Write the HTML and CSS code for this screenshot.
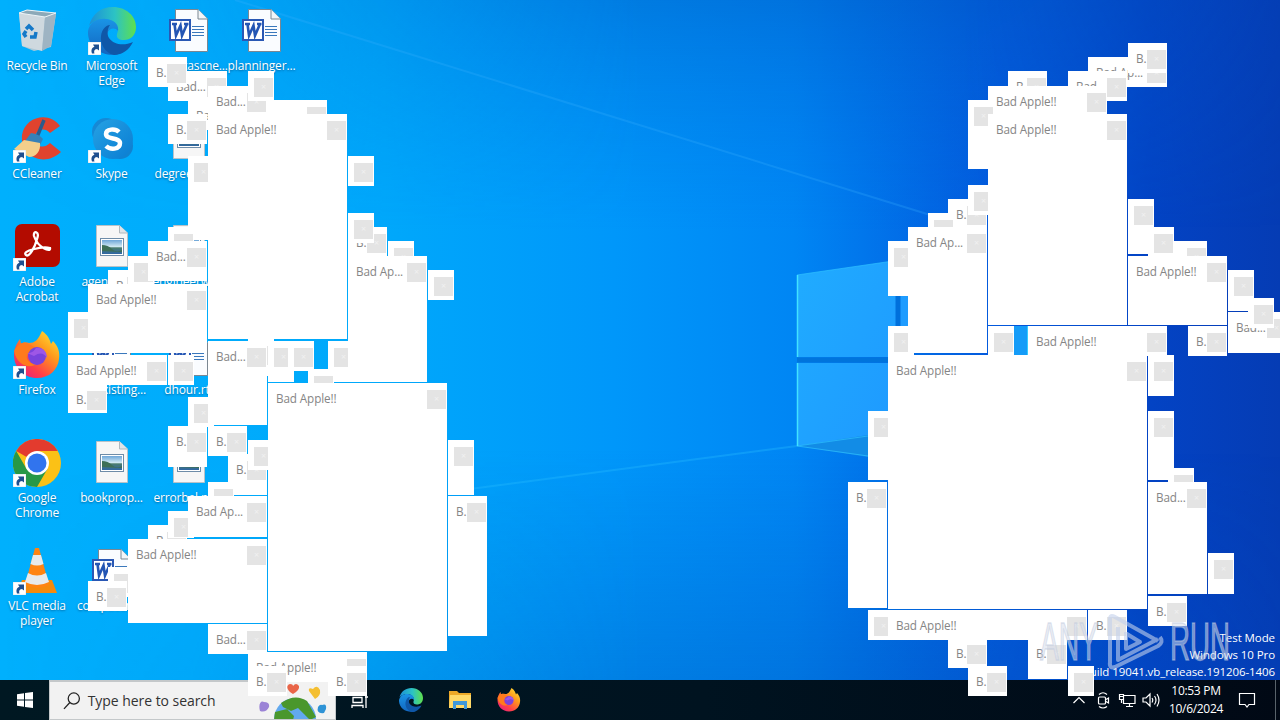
FILE: index.html
```html
<!DOCTYPE html>
<html lang="en">
<head>
<meta charset="utf-8">
<title>Desktop</title>
<link rel="stylesheet" href="styles.css">
</head>
<body>
<svg class="defs" width="0" height="0">
  <defs>
    <linearGradient id="gEdgeA" x1="0" y1="0" x2="1" y2="0"><stop offset="0" stop-color="#1b8fd8"/><stop offset=".55" stop-color="#2cc3c4"/><stop offset="1" stop-color="#5fe04c"/></linearGradient>
    <linearGradient id="gEdgeB" x1="0" y1="0" x2="0" y2="1"><stop offset="0" stop-color="#1a94e6"/><stop offset="1" stop-color="#1266c0"/></linearGradient>
    <linearGradient id="gFox" x1="1" y1="0" x2=".2" y2="1"><stop offset="0" stop-color="#fff03a"/><stop offset=".4" stop-color="#ff9a1c"/><stop offset=".75" stop-color="#ff4048"/><stop offset="1" stop-color="#e8217c"/></linearGradient>
    <linearGradient id="gSky" x1="0" y1="0" x2="0" y2="1"><stop offset="0" stop-color="#6ea6d8"/><stop offset=".5" stop-color="#d6ecf4"/><stop offset=".55" stop-color="#4b7d6e"/><stop offset="1" stop-color="#2f66a4"/></linearGradient>
    <linearGradient id="gSkype" x1="0" y1="0" x2="1" y2="1"><stop offset="0" stop-color="#25a2e4"/><stop offset="1" stop-color="#0a7cd2"/></linearGradient>
  </defs>
  <symbol id="arrow" viewBox="0 0 13 13"><rect width="13" height="13" fill="#fff" stroke="#c8d4dc" stroke-width=".6"/><path d="M4 11.500C2.500 7.500 4.500 5 6.500 5L5 2.500H11V8.500L9 7C7 7.200 5.500 8.500 6.500 11.500Z" fill="#1f4f8f"/></symbol>
  <symbol id="edge" viewBox="0 0 48 48">
    <path d="M1 19C4 7 13 0 25 0C38 0 48 9 48 20C48 29 42 33 36 33C31 33 28 31 29 27C32 21 27 13 18 12C10 12 4 15 1 19Z" fill="url(#gEdgeA)"/>
    <path d="M0 24C2 15 10 11 18 12C27 13 31 18 30 24C27 20 21 21 19 27C16 36 24 44 34 46C18 52 -1 42 0 24Z" fill="url(#gEdgeB)"/>
    <path d="M13 29C14 22 18 18 22 18C19 22 19 28 21 31C26 38 36 39 45 35C41 43 34 48 26 48C17 46 12 37 13 29Z" fill="#0f57a8"/>
  </symbol>
  <symbol id="firefox" viewBox="0 0 48 48">
    <path d="M24 47C11 47 1 37 1 24C1 17 4 12 7 8L8 13C10 11 13 11 16 12C22 12 25 9 29 0C35 4 37 9 38 13L40 10C45 15 47 21 46 28C45 39 36 47 24 47Z" fill="url(#gFox)"/>
    <path d="M1 20C5 12 10 10 16 13L23 17L16 22C11 25 15 33 23 33C17 38 4 35 1 20Z" fill="#ff7a1c"/>
    <circle cx="24" cy="25" r="9" fill="#7a43dc"/><path d="M14 22C19 22 21 20 23 17C29 16 34 20 34 27C31 22 27 21 21 25Z" fill="#9e57e6"/>
  </symbol>
  <symbol id="word" viewBox="0 0 48 48">
    <path d="M10.500 2.500H33L42.500 12V44.500H10.500Z" fill="#fafcff" stroke="#7b8792"/><path d="M33 2.500V12H42.500" fill="#f2f5f8" stroke="#7b8792"/>
    <path d="M27 19.500H39M27 22.500H39M27 25.500H39M27 28.500H39" stroke="#3a78bc"/>
    <rect x="5" y="13" width="20" height="20" fill="#fff" stroke="#2a58b4" stroke-width="2"/>
    <path d="M7 17H12M9.500 17L11 28.500L15.500 18.500L17 28.500L22 17M19 17H23.500" fill="none" stroke="#2456b4" stroke-width="2.600"/>
  </symbol>
  <symbol id="photo" viewBox="0 0 48 48">
    <path d="M8.500 2.500H31.500L39.500 10V43.500H8.500Z" fill="#f6f6f6" stroke="#b9c2c8"/><path d="M31.500 2.500V10H39.500" fill="#e0e4e8" stroke="#b0b8be"/>
    <rect x="12.500" y="15.500" width="23" height="17" fill="#fff" stroke="#6e8ca8"/><rect x="14" y="17" width="20" height="14" fill="url(#gSky)"/><path d="M14 22Q20 22 24 26T34 27V29L14 28Z" fill="#3d6f58"/>
  </symbol>
</svg>

<div class="screen">
  <svg class="wallpaper" viewBox="0 0 1280 720" preserveAspectRatio="none">
    <defs>
      <linearGradient id="base" x1="0" y1="0" x2="1" y2="0">
        <stop offset="0" stop-color="#00b0fd"/><stop offset=".3" stop-color="#00a8fb"/><stop offset=".48" stop-color="#0097fa"/><stop offset=".62" stop-color="#0086f4"/><stop offset=".78" stop-color="#0358dc"/><stop offset=".9" stop-color="#0343c4"/><stop offset="1" stop-color="#053cb4"/>
      </linearGradient>
      <linearGradient id="topShade" x1="0" y1="0" x2="0" y2="1"><stop offset="0" stop-color="#0058c0" stop-opacity=".42"/><stop offset="1" stop-color="#0070e0" stop-opacity="0"/></linearGradient>
      <linearGradient id="botShade" x1="0" y1="0" x2="0" y2="1"><stop offset="0" stop-color="#0058c0" stop-opacity="0"/><stop offset="1" stop-color="#0052b8" stop-opacity=".4"/></linearGradient>
      <linearGradient id="fade" x1="0" y1="0" x2="1" y2="0"><stop offset="0" stop-color="#000"/><stop offset=".15" stop-color="#222"/><stop offset=".5" stop-color="#fff"/><stop offset=".75" stop-color="#fff"/><stop offset="1" stop-color="#333"/></linearGradient>
      <mask id="m"><rect width="1280" height="720" fill="url(#fade)"/></mask>
      <linearGradient id="pane" x1="0" y1="0" x2="1" y2="1"><stop offset="0" stop-color="#20acff"/><stop offset="1" stop-color="#1e98ff"/></linearGradient>
    </defs>
    <rect width="1280" height="720" fill="url(#base)"/>
    <g mask="url(#m)"><rect width="1280" height="230" fill="url(#topShade)"/><rect y="450" width="1280" height="270" fill="url(#botShade)"/></g>
    <path d="M235 0L940 218" stroke="#3cb2ff" stroke-width="2" opacity=".25"/>
    <path d="M797 446L470 489" stroke="#27bcff" stroke-width="2" opacity=".35"/>
    <path d="M797 275L900 260V357H797ZM797 363H900V457L797 446Z" fill="url(#pane)"/>
    <path d="M797 446L868 435V457Z" fill="#128ce6"/>
    <path d="M797 446L868 436M797 446L868 456M797 275L900 260" stroke="#2ec1ff" fill="none" opacity=".7"/>
    <path d="M797.500 275V357M797.500 363V446" stroke="#42e2ff" stroke-width="1.500"/>
    <path d="M797 360H900" stroke="#0074dc" stroke-width="5"/>
    <path d="M900 290H908V330H900Z" fill="#1e9cff"/><path d="M898 290V330" stroke="#0070dc" stroke-width="5"/>
    <path d="M1014 326H1028V355H1014Z" fill="#159cf8"/><path d="M1027.500 326V355" stroke="#35ccff"/>
  </svg>

  <main class="desktop">
    <div class="col">
      <div class="item"><svg class="ico" viewBox="0 0 48 48"><path d="M6 6L14 3L43 7L38 40L21 44L9 39Z" fill="#bccad3" opacity=".92"/><path d="M6 6L32 10L29 44L9 39Z" fill="#cfd9df"/><path d="M32 10L43 6L38 39L29 44Z" fill="#9eb4c3"/><path d="M6 6L14 3L43 6L32 10Z" fill="#8ca9b8" stroke="#edf4f7"/><path d="M13 22L16 19L20 23M23 25L22 30H17M13 30L11 27L13 24" fill="none" stroke="#1579c8" stroke-width="3.500"/></svg><span>Recycle Bin</span></div>
      <div class="item"><svg class="ico" viewBox="0 0 48 48"><path d="M47 11C37 -4 12 1 9 20C7 41 31 53 48 37L37 28C29 36 21 29 22 22C23 14 32 12 37 18Z" fill="#e0432e"/><path d="M31 5L24 22" stroke="#2b5b8c" stroke-width="3.500"/><path d="M18 18Q26 19 30 24L27 30L12 26Z" fill="#3681b8"/><path d="M11 25L27 28C28 36 23 42 16 42L1 34Z" fill="#f3cf8b"/></svg><svg class="mark"><use href="#arrow"/></svg><span>CCleaner</span></div>
      <div class="item"><svg class="ico" viewBox="0 0 48 48"><rect x="2" y="1" width="45" height="43" rx="7" fill="#b30b00"/><path d="M13 32C8 28 29 23 37 25C38 30 25 25 21 13C20 7 27 8 24 16C22 24 16 35 13 32Z" fill="none" stroke="#fff" stroke-width="2.300"/></svg><svg class="mark"><use href="#arrow"/></svg><span>Adobe<br>Acrobat</span></div>
      <div class="item"><svg class="ico"><use href="#firefox"/></svg><svg class="mark"><use href="#arrow"/></svg><span>Firefox</span></div>
      <div class="item"><svg class="ico" viewBox="0 0 48 48"><circle cx="24" cy="24" r="24" fill="#fbc116"/><path d="M24 24L3.200 12A24 24 0 0 1 44.800 12H24Z" fill="#e33b2e"/><path d="M3.200 12A24 24 0 0 0 24 48L34.400 30L13.600 30Z" fill="#279847"/><circle cx="24" cy="24" r="12" fill="#fff"/><circle cx="24" cy="24" r="9.500" fill="#3174ee"/></svg><svg class="mark"><use href="#arrow"/></svg><span>Google<br>Chrome</span></div>
      <div class="item"><svg class="ico" viewBox="0 0 48 48"><path d="M9 33H39L44 46H4Z" fill="#f58a0d"/><path d="M22 1H26L36 38Q24 44 12 38Z" fill="#ff8412"/><path d="M20 8H28L30.500 17Q24 20 17.500 17ZM15 26Q24 31 33 26L36 35Q24 41 12 35Z" fill="#e7eaec"/></svg><svg class="mark"><use href="#arrow"/></svg><span>VLC media<br>player</span></div>
    </div>
    <div class="col">
      <div class="item"><svg class="ico"><use href="#edge"/></svg><svg class="mark"><use href="#arrow"/></svg><span>Microsoft<br>Edge</span></div>
      <div class="item"><svg class="ico" viewBox="0 0 48 48"><circle cx="18" cy="17" r="14" fill="#1689d5"/><circle cx="32" cy="31" r="13" fill="#1182d0"/><circle cx="25" cy="24" r="20" fill="url(#gSkype)"/><path d="M31 17C27 13 18 14 18 19C18 25 32 22 32 28C32 35 22 35 18 31" stroke="#fff" stroke-width="4.500" fill="none"/></svg><svg class="mark"><use href="#arrow"/></svg><span>Skype</span></div>
      <div class="item"><svg class="ico"><use href="#photo"/></svg><span>agencyn.j...</span></div>
      <div class="item"><svg class="ico"><use href="#word"/></svg><span>cityexisting...</span></div>
      <div class="item"><svg class="ico"><use href="#photo"/></svg><span>bookprop...</span></div>
      <div class="item"><svg class="ico"><use href="#word"/></svg><span>computera...</span></div>
    </div>
    <div class="col">
      <div class="item"><svg class="ico"><use href="#word"/></svg><span>americascne...</span></div>
      <div class="item"><svg class="ico"><use href="#photo"/></svg><span>degreefree...</span></div>
      <div class="item"><svg class="ico"><use href="#photo"/></svg><span>engineerwa...</span></div>
      <div class="item"><svg class="ico"><use href="#word"/></svg><span>dhour.rtf</span></div>
      <div class="item"><svg class="ico"><use href="#photo"/></svg><span>errorbel.pn...</span></div>
    </div>
    <div class="col">
      <div class="item"><svg class="ico"><use href="#word"/></svg><span>planninger...</span></div>
    </div>
    <div class="build"><div>Test Mode</div><div>Windows 10 Pro</div><div>Build 19041.vb_release.191206-1406</div></div>
  </main>

  <footer class="taskbar">
    <div class="start"><svg width="16" height="16" viewBox="0 0 16 16"><path d="M0 2.300L7 1.300V7.500H0ZM8 1.100L16 0V7.500H8ZM0 8.500H7V14.700L0 13.700ZM8 8.500H16V16L8 14.900Z" fill="#fff"/></svg></div>
    <div class="search">
      <svg class="lens" viewBox="0 0 18 18"><circle cx="11" cy="6.500" r="5.700"/><path d="M7 10.500L1 17"/></svg>
      <span>Type here to search</span>
      <svg class="globe" viewBox="0 0 76 38">
        <circle cx="36" cy="37" r="21" fill="#62a9ee"/>
        <path d="M22 21Q36 11 48 19L57 35L51 38L45 32L39 26L32 29L24 25ZM16 30L28 27L35 34L34 38H15Z" fill="#4a972c"/>
        <path d="M34 12C27 8 27 3 31 2Q34 2 34 4Q37 0 40 4Q41 8 34 12Z" fill="#e96548"/><path d="M50 9Q49 5 54 7Q58 2 61 8Q62 14 56 17Z" fill="#f4bf32"/><path d="M1 29C-1 22 2 18 5 20Q11 20 10 25Q7 31 1 29Z" fill="#9b83d6"/><path d="M59 25Q61 22 63 23Q68 21 67 27L65 31Q57 32 59 25Z" fill="#2f93d6"/>
      </svg>
    </div>
    <div class="apps">
      <svg class="view" viewBox="0 0 18 18"><path d="M1 1V3.500H12V1M1 17V14.500H12V17M2 6.500H11V11.500H2ZM15 1V17M14 6H17" fill="none" stroke="#fff" stroke-width="1.300"/></svg>
      <svg class="app"><use href="#edge"/></svg>
      <svg class="app" viewBox="0 0 24 24"><path d="M1 3H9L11 5H23V20H1Z" fill="#eda928"/><path d="M2 7H23V20H1Z" fill="#ffd968"/><path d="M5 13H19V21H16V17H8V21H5Z" fill="#3e98da"/></svg>
      <svg class="app"><use href="#firefox"/></svg>
    </div>
    <div class="tray">
      <svg class="t" viewBox="0 0 18 18"><path d="M3.500 12L9 6.500L14.500 12"/></svg>
      <svg class="t" viewBox="0 0 18 18"><rect x="4.500" y="6" width="7" height="7" rx="1"/><path d="M12 8.500L14.500 7V12L12 10.500M5 3.500Q9 0 13 3.500M5 15.500Q9 18.500 13 15.500"/></svg>
      <svg class="t" viewBox="0 0 18 18"><path d="M5.500 4.500H17V12.500H5.500V9M11.500 12.500V15.500M8 15.500H15M1.500 3.500H5.500V8.500H1.500ZM3.500 8.500V12M1.500 5.500H5.500"/></svg>
      <svg class="t" viewBox="0 0 18 18"><path d="M1 7H4L8 3V15L4 11H1ZM10 7Q11.500 9 10 11.500M12.500 5Q15.500 9 12.500 13.500M15 3Q19 9 15 15.500"/></svg>
      <div class="clock"><div>10:53 PM</div><div>10/6/2024</div></div>
      <svg class="note" viewBox="0 0 18 18"><path d="M1.500 2.500H16.500V13.500H11L9 16L7 13.500H1.500Z"/></svg>
      <i class="peek"></i>
    </div>
  </footer>

  <div class="windows" id="windows"></div>

  <svg class="brand" viewBox="0 0 200 60">
    <text x="4" y="48" textLength="58" lengthAdjust="spacingAndGlyphs">ANY</text>
    <text x="134" y="48" textLength="60" lengthAdjust="spacingAndGlyphs">RUN</text>
    <path d="M74 51V7Q74 2 79 5L122 29M82 15V48L122 27M90 20V37L104 30L91 22M124 25Q128 30 122 34L79 55Q73 57 74 50"/>
  </svg>
</div>
<script src="windows.js"></script>
</body>
</html>
```

FILE: styles.css
```css
* { box-sizing: border-box; }
body { margin: 0; overflow: hidden; font-family: "Open Sans", "Noto Sans", sans-serif; font-size: 12px; }
.defs { position: absolute; }
.screen { position: relative; width: 1280px; height: 720px; overflow: hidden; display: flex; flex-direction: column; }
.wallpaper { position: absolute; inset: 0; width: 1280px; height: 720px; }
.desktop { position: relative; flex: 1; display: flex; min-height: 0; }
.col { width: 75px; display: grid; grid-auto-rows: 108px; align-content: start; }
.item { position: relative; display: flex; flex-direction: column; align-items: center; padding: 7px 1px 0 0; color: #fff; line-height: 15px; text-align: center; font-size: 12px; letter-spacing: -.15px; text-shadow: 0 1px 2px rgba(0,40,80,.5); }
.col:first-child .item { padding-right: 1px; }
.col:nth-child(n+2) .item { padding-right: 2px; }
.item span { margin-top: 3px; white-space: nowrap; }
.ico { width: 48px; height: 48px; flex: none; }
.item .mark { position: absolute; left: 13px; top: 42px; width: 13px; height: 13px; }
.build { position: absolute; right: 5px; bottom: 0; color: #fff; text-align: right; font-size: 11.5px; line-height: 17px; letter-spacing: -.08px; white-space: nowrap; }
.taskbar { position: relative; height: 40px; display: flex; background: linear-gradient(90deg, #001822, #001320 55%, #010915); }
.start { width: 49px; display: flex; align-items: center; justify-content: center; }
.search { width: 287px; display: flex; align-items: center; background: #f2f2f2; border: 1px solid #c4c8ca; border-top-width: 2px; overflow: hidden; padding-left: 13px; color: #333; font-size: 14px; }
.search span { margin-left: 7px; white-space: nowrap; width: 148px; letter-spacing: -.05px; }
.lens { width: 18px; height: 18px; fill: none; stroke: #222; stroke-width: 1.3; }
.globe { width: 76px; height: 38px; margin-left: 26px; flex: none; }
.apps { display: flex; align-items: center; padding-left: 15px; }
.view { width: 18px; height: 18px; margin-right: 30px; }
.app { width: 24px; height: 24px; margin-right: 25px; }
.tray { margin-left: auto; display: flex; align-items: center; color: #fff; }
.t { width: 18px; height: 18px; margin-right: 6px; }
.t path, .t rect, .note path { fill: none; stroke: #fff; stroke-width: 1.2; }
.clock { width: 62px; margin-left: -1px; text-align: center; font-size: 12px; line-height: 18px; letter-spacing: -.3px; white-space: nowrap; }
.note { width: 18px; height: 18px; margin-left: 11px; }
.peek { width: 1px; height: 40px; background: #59636b; margin: 0 4px 0 19px; }
.windows { position: absolute; inset: 0; }
.win { position: absolute; overflow: hidden; background: #fff; color: #858585; font-size: 11.7px; line-height: 16px; padding: 7px 0 0 8px; white-space: nowrap; letter-spacing: -.1px; }
.win b { position: absolute; right: 1px; top: 7px; width: 19px; height: 19px; background: #e4e4e4; color: #f1f1f1; font-weight: 400; font-size: 9px; line-height: 18px; text-align: center; }
.brand { position: absolute; left: 1036px; top: 612px; width: 200px; height: 60px; overflow: visible; }
.brand text { font: 53px "Liberation Sans", sans-serif; fill: rgba(215,222,236,.55); stroke: rgba(190,200,220,.5); stroke-width: 1.5; }
.brand path { fill: none; stroke: rgba(195,208,235,.6); stroke-width: 4; stroke-linejoin: round; }
```

FILE: windows.js
```js
// Open windows, back to front: [left, top, width, height, title override]
const list = [
  [188,100,139,30],[168,71,59,30],[148,57,39,30],[208,86,59,30],[248,71,26,30],
  [188,156,26,84],[168,114,39,30],[348,156,26,30],
  [348,227,39,30],[348,213,26,30],[388,241,26,30],[348,256,79,126],[428,270,26,30],
  [208,114,139,225],
  [168,227,26,30],[108,270,39,30],[128,256,26,30],[148,241,59,40],[68,312,26,41],[88,284,119,69],
  [68,384,39,29],[68,355,99,30],[168,355,26,30],
  [188,397,26,30],[328,341,20,41],[248,339,26,37],[268,341,26,41],[288,341,26,30],[208,341,59,84],[308,369,26,30],
  [168,426,39,41],[208,426,39,30],[228,454,39,41],[248,440,26,30],[208,482,26,30],
  [148,525,39,30],[168,511,26,27],[188,496,79,41],[108,567,26,30],[88,581,39,30],[128,539,139,84],
  [208,624,59,30],[248,652,119,30],[248,666,39,30],[328,666,39,30],
  [448,440,26,55],[448,496,39,140],[268,383,179,268],
  [1088,57,79,30],[1128,43,39,30],[1008,71,39,30],[1068,71,59,30],[988,86,119,30],
  [968,100,26,69],[948,199,39,30],[968,185,26,30],[928,213,26,30],[888,241,26,55],[888,326,26,30],[908,227,79,126],
  [988,114,139,211],[988,326,26,30],[1028,326,139,30],
  [1168,241,39,30,""],[1128,199,26,55],[1148,227,26,30],[1128,256,99,69],
  [1228,270,26,41],[1228,312,59,41],[1248,298,26,30],[1188,326,39,30],
  [868,411,26,69],[848,482,39,126],[1148,355,26,41],[1148,411,26,69],[1168,468,26,30],[1148,482,59,112],[1208,553,26,41],[1148,596,39,30],
  [888,355,259,254],[868,610,26,30],[888,610,199,30],[1088,610,39,30],
  [948,638,39,30],[968,666,39,30],[1028,638,39,41],[1068,666,26,30]
];

function titleFor(w) {
  if (w < 39) return "";
  if (w < 59) return "B.";
  if (w < 79) return "Bad...";
  if (w < 99) return "Bad Ap...";
  return "Bad Apple!!";
}

const layer = document.getElementById("windows");
for (const [x, y, w, h, title] of list) {
  const win = document.createElement("div");
  win.className = "win";
  win.style.cssText = `left:${x}px;top:${y}px;width:${w}px;height:${h}px`;
  win.textContent = title ?? titleFor(w);
  const close = document.createElement("b");
  close.textContent = "×";
  // narrow windows keep the button at a fixed distance from the left edge
  if (w < 39) close.style.left = "6px";
  win.append(close);
  layer.append(win);
}
```
